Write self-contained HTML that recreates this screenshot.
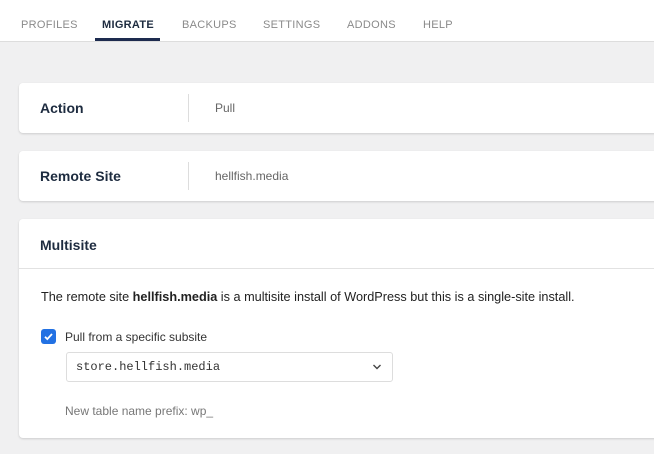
<!DOCTYPE html>
<html><head><style>
*{box-sizing:border-box;margin:0;padding:0}
body{width:654px;height:454px;overflow:hidden;background:#f0f0f1;font-family:"Liberation Sans",sans-serif;position:relative}
.nav{position:absolute;left:0;top:0;width:654px;height:42px;background:#fff;border-bottom:1px solid #ddd}
.nav span{position:absolute;top:19px;font-size:11px;letter-spacing:.3px;color:#8a8a8a}
.nav .act{color:#1d2b3f;font-weight:bold}
.ul{position:absolute;left:95px;top:38px;width:65px;height:3px;background:#1d2b4f}
.card{position:absolute;left:19px;width:660px;background:#fff;border-radius:4px;box-shadow:0 1px 2px rgba(0,0,0,.15)}
.h{position:absolute;left:21px;font-size:14px;font-weight:bold;color:#1d2b3f}
.v{position:absolute;left:196px;font-size:12px;color:#666}
.div{position:absolute;left:169px;width:1px;background:#ddd}
</style></head><body>
<div class="nav">
<span style="left:21px">PROFILES</span>
<span class="act" style="left:102px">MIGRATE</span>
<span style="left:182px">BACKUPS</span>
<span style="left:263px">SETTINGS</span>
<span style="left:347px">ADDONS</span>
<span style="left:423px">HELP</span>
<div class="ul"></div>
</div>
<div class="card" style="top:83px;height:50px">
<div class="h" style="top:17px">Action</div><div class="div" style="top:11px;height:28px"></div><div class="v" style="top:18px">Pull</div>
</div>
<div class="card" style="top:151px;height:50px">
<div class="h" style="top:17px">Remote Site</div><div class="div" style="top:11px;height:28px"></div><div class="v" style="top:18px">hellfish.media</div>
</div>
<div class="card" style="top:219px;height:219px">
<div class="h" style="top:18px">Multisite</div>
<div style="position:absolute;left:0;top:49px;width:100%;height:1px;background:#e2e2e2"></div>
<div style="position:absolute;left:22px;top:71px;font-size:12.7px;color:#222">The remote site <b>hellfish.media</b> is a multisite install of WordPress but this is a single-site install.</div>
<div style="position:absolute;left:22px;top:110px;width:15px;height:15px;background:#2271e3;border-radius:3px"><svg width="15" height="15" viewBox="0 0 15 15"><path d="M4 7.8l2.3 2.3L11 5" stroke="#fff" stroke-width="1.8" fill="none"/></svg></div>
<div style="position:absolute;left:46px;top:111px;font-size:12px;color:#333">Pull from a specific subsite</div>
<div style="position:absolute;left:47px;top:133px;width:327px;height:30px;border:1px solid #ddd;border-radius:3px">
<div style="position:absolute;left:9px;top:7px;font-family:'Liberation Mono',monospace;font-size:12px;color:#333">store.hellfish.media</div>
<svg style="position:absolute;right:10px;top:10px" width="10" height="8" viewBox="0 0 10 8"><path d="M1.5 2l3.5 3.5L8.5 2" stroke="#444" stroke-width="1.4" fill="none"/></svg>
</div>
<div style="position:absolute;left:46px;top:185px;font-size:12px;color:#777">New table name prefix: wp_</div>
</div>
</body></html>
